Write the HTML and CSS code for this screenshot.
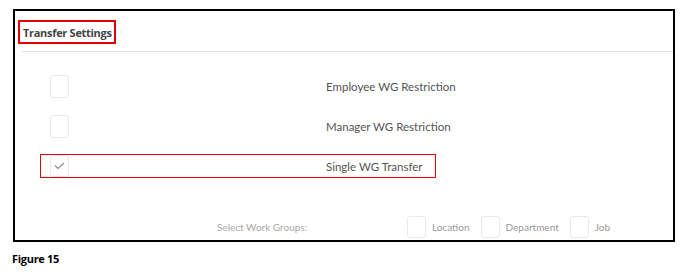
FILE: index.html
```html
<!DOCTYPE html>
<html lang="en">
<head>
    <meta charset="UTF-8">
    <title>Transfer Settings</title>
    <link rel="stylesheet" href="styles.css">
</head>
<body>
    <div class="frame">
        <div class="header">
            <h3 class="title">Transfer Settings</h3>
        </div>
        <div class="divider"></div>

        <div class="rows">
            <div class="row">
                <span class="check"></span>
                <p class="label">Employee WG Restriction</p>
            </div>
            <div class="row">
                <span class="check"></span>
                <p class="label">Manager WG Restriction</p>
            </div>
            <div class="row marked">
                <span class="check">
                    <svg width="11" height="8" viewBox="0 0 11 8"><path d="M1 3.5 L4 6.5 L10 1" fill="none" stroke="#8a8a8a" stroke-width="1.1"/></svg>
                </span>
                <p class="label">Single WG Transfer</p>
            </div>
        </div>

        <div class="groups">
            <p class="groups-title">Select Work Groups:</p>
            <div class="group"><span class="check small"></span><p>Location</p></div>
            <div class="group"><span class="check small"></span><p>Department</p></div>
            <div class="group"><span class="check small"></span><p>Job</p></div>
        </div>
    </div>
    <p class="caption">Figure 15</p>
</body>
</html>
```

FILE: styles.css
```css
*{
    margin: 0;
    box-sizing: border-box;
}
body{
    background-color: white;
    font-family: "Lato", "Open Sans", sans-serif;
}

.frame{
    margin: 9px 0 0 13px;
    width: 662px;
    height: 233px;
    border: 2px solid black;
}

.header{
    padding: 9px 0 0 3px;
}

.title{
    display: inline-block;
    height: 24px;
    line-height: 21px;
    padding: 0 2px 0 3px;
    border: 2px solid #e60000;
    font-family: "Open Sans", sans-serif;
    font-size: 11px;
    font-weight: 700;
    letter-spacing: -0.3px;
    color: #444;
}

.divider{
    margin: 7px 0 0 7px;
    height: 1px;
    background-color: #e2e2e2;
}

.rows{
    padding-top: 14px;
}

.row{
    display: flex;
    align-items: center;
    height: 40px;
    padding-left: 35px;
}

.row.marked{
    height: 24px;
    margin: 8px 0 0 25px;
    width: 396px;
    padding-left: 9px;
    border: 1px solid #e60000;
}

.check{
    display: flex;
    align-items: center;
    justify-content: center;
    width: 19px;
    height: 23px;
    border: 1px solid #e9e9e9;
    border-radius: 3px;
    background-color: white;
}

.row.marked .check{
    height: 22px;
}

.label{
    margin-left: 257px;
    font-size: 11.5px;
    color: #555;
}

.groups{
    display: flex;
    align-items: center;
    margin-top: 38px;
    padding-left: 202px;
    font-size: 10px;
    color: #a8a8a8;
}

.groups-title{
    width: 190px;
}

.group{
    display: flex;
    align-items: center;
    gap: 6px;
    margin-right: 11px;
    color: #999;
}

.check.small{
    width: 19px;
    height: 22px;
}

.caption{
    margin: 9px 0 0 12px;
    font-family: "Open Sans", sans-serif;
    font-size: 11px;
    font-weight: 700;
    letter-spacing: -0.3px;
    color: black;
}
```
